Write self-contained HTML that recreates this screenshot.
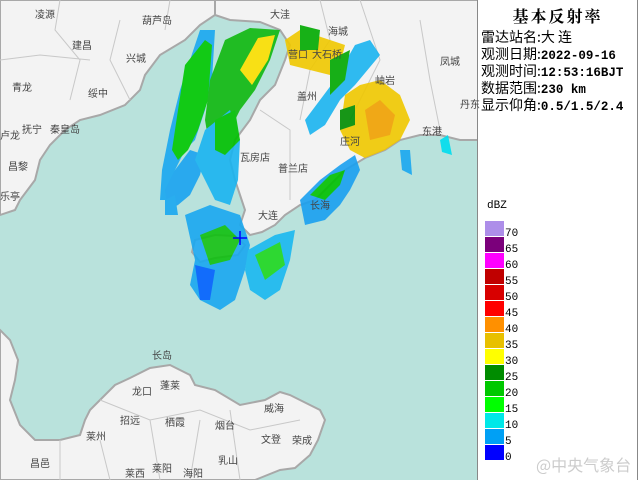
<!DOCTYPE html><html><head><meta charset="utf-8"><style>
html,body{margin:0;padding:0;width:640px;height:480px;overflow:hidden;background:#fff}
.l{position:absolute;font:10px "Liberation Sans","Noto Sans CJK SC",sans-serif;color:#444;white-space:nowrap}
.p{position:absolute;left:481px;font:14px "Noto Sans CJK SC",sans-serif;color:#000;white-space:nowrap;line-height:17px}
.p b{font:bold 12.5px "Liberation Mono",monospace}
.b{position:absolute;left:485px;width:19px;height:15px}
.n{position:absolute;left:505px;font:11px "Liberation Mono",monospace;color:#000}
</style></head><body>
<svg width="478" height="480" style="position:absolute;left:0;top:0">
<rect width="478" height="480" fill="#b9e2dc"/>
<g fill="#f3f3f3" stroke="#a8a8a8" stroke-width="2">
<polygon points="0,0 215,0 215,15 200,25 185,40 160,55 145,75 140,90 125,105 100,115 80,120 65,130 50,145 40,160 35,180 20,200 15,210 0,215"/>
<polygon points="215,0 478,0 478,140 460,140 440,135 420,135 400,140 385,150 365,158 345,170 330,185 315,200 300,205 285,215 275,225 262,232 250,235 240,225 245,210 240,195 235,180 230,160 235,140 250,120 260,100 275,85 285,60 290,45 280,30 260,22 230,20 215,15"/>
<polygon points="0,330 10,340 18,360 15,380 10,400 20,425 35,440 60,440 80,435 85,420 90,410 100,400 115,385 130,378 150,368 170,365 190,375 195,385 215,390 240,405 265,400 280,392 290,395 320,410 325,420 318,440 310,455 295,468 280,470 260,478 255,480 0,480"/>
<polygon points="195,240 215,235 235,236 245,245 238,255 215,258 200,262 192,252"/>
</g>
<g stroke="#c8c8c8" stroke-width="1" fill="none">
<path d="M60,0 L55,30 80,60 70,100 M0,60 L40,55 90,60 M120,20 L110,60 130,100 M170,0 L165,30 M320,0 L330,40 310,70 300,120 M360,0 L380,60 350,120 M420,20 L430,80 440,130 M260,110 L290,130 290,200 M100,440 L110,480 M150,420 L160,480 M200,420 L190,480 M60,440 L60,480 M230,410 L240,480 M100,400 L150,420 200,410 250,430 300,420"/>
</g>
<g opacity="0.9">
<path d="M180,90 L200,30 215,30 212,80 205,110 195,140 185,150 175,170 168,200 160,200 162,170 170,130 Z" fill="#1aa8f0"/>
<path d="M185,65 L205,40 212,45 208,100 198,130 188,150 178,160 172,150 178,110 Z" fill="#00c800"/>
<path d="M175,170 L190,150 205,155 200,175 190,195 178,205 168,210 165,190 Z" fill="#1aa3f0"/>
<path d="M210,80 L225,40 250,28 280,30 270,60 255,90 240,110 225,140 210,150 205,120 Z" fill="#10b810"/>
<path d="M240,70 L258,38 275,35 268,60 252,85 Z" fill="#ffe000"/>
<path d="M205,130 L230,110 240,140 238,180 230,205 215,200 205,180 195,160 Z" fill="#1ab4f0"/>
<path d="M215,120 L235,110 240,140 225,155 215,150 Z" fill="#00c000"/>
<path d="M285,40 L300,30 330,40 345,45 340,65 330,75 310,70 290,65 Z" fill="#f0c800"/>
<path d="M300,25 L320,30 318,50 300,50 Z" fill="#00aa00"/>
<path d="M355,45 L370,40 380,55 355,85 340,100 325,125 310,135 305,120 320,100 335,80 Z" fill="#1ab4f0"/>
<path d="M330,60 L350,50 345,80 330,95 Z" fill="#00a800"/>
<path d="M345,95 L360,85 380,80 400,95 410,120 400,140 385,150 365,158 350,150 340,130 Z" fill="#f0c800"/>
<path d="M365,110 L380,100 395,115 390,135 370,140 Z" fill="#f0a000"/>
<path d="M340,110 L355,105 355,125 340,130 Z" fill="#008c00"/>
<path d="M300,200 L320,180 340,165 355,155 360,170 350,190 340,205 325,220 305,225 Z" fill="#1aa0f0"/>
<path d="M310,195 L330,175 345,170 340,185 325,200 Z" fill="#00c000"/>
<path d="M185,215 L210,205 240,215 250,245 245,270 235,300 220,310 200,300 190,285 195,260 Z" fill="#1aa8f0"/>
<path d="M200,235 L225,225 240,240 230,260 210,265 Z" fill="#10c010"/>
<path d="M248,250 L275,235 295,230 290,260 280,290 265,300 250,290 245,270 Z" fill="#1ab8f0"/>
<path d="M255,255 L280,242 285,265 265,280 Z" fill="#20d820"/>
<path d="M195,265 L215,270 210,300 200,300 Z" fill="#0060ff"/>
<path d="M165,200 L175,195 178,215 165,215 Z" fill="#1aa8f0"/>
<path d="M440,140 L448,135 452,155 442,152 Z" fill="#00ddee"/>
<path d="M400,150 L410,150 412,175 402,170 Z" fill="#1aa8f0"/>
</g>
<path d="M233,238 h14 M240,231 v14" stroke="#0000ff" stroke-width="1.5"/>
</svg>
<div style="position:absolute;left:477px;top:0;width:1px;height:480px;background:#888"></div>
<div style="position:absolute;left:637px;top:0;width:1px;height:480px;background:#888"></div>
<div class="l" style="left:35px;top:6px">凌源</div><div class="l" style="left:142px;top:12px">葫芦岛</div>
<div class="l" style="left:72px;top:37px">建昌</div><div class="l" style="left:126px;top:50px">兴城</div>
<div class="l" style="left:12px;top:79px">青龙</div><div class="l" style="left:88px;top:85px">绥中</div>
<div class="l" style="left:22px;top:121px">抚宁</div><div class="l" style="left:50px;top:121px">秦皇岛</div>
<div class="l" style="left:0px;top:127px">卢龙</div><div class="l" style="left:8px;top:158px">昌黎</div>
<div class="l" style="left:0px;top:188px">乐亭</div><div class="l" style="left:270px;top:6px">大洼</div>
<div class="l" style="left:328px;top:23px">海城</div><div class="l" style="left:288px;top:46px">营口</div>
<div class="l" style="left:312px;top:46px">大石桥</div><div class="l" style="left:297px;top:88px">盖州</div>
<div class="l" style="left:440px;top:53px">凤城</div><div class="l" style="left:375px;top:72px">岫岩</div>
<div class="l" style="left:460px;top:96px">丹东</div><div class="l" style="left:422px;top:123px">东港</div>
<div class="l" style="left:340px;top:133px">庄河</div><div class="l" style="left:240px;top:149px">瓦房店</div>
<div class="l" style="left:278px;top:160px">普兰店</div><div class="l" style="left:310px;top:197px">长海</div>
<div class="l" style="left:258px;top:207px">大连</div><div class="l" style="left:152px;top:347px">长岛</div>
<div class="l" style="left:132px;top:383px">龙口</div><div class="l" style="left:160px;top:377px">蓬莱</div>
<div class="l" style="left:120px;top:412px">招远</div><div class="l" style="left:165px;top:414px">栖霞</div>
<div class="l" style="left:215px;top:417px">烟台</div><div class="l" style="left:264px;top:400px">威海</div>
<div class="l" style="left:261px;top:431px">文登</div><div class="l" style="left:292px;top:432px">荣成</div>
<div class="l" style="left:86px;top:428px">莱州</div><div class="l" style="left:30px;top:455px">昌邑</div>
<div class="l" style="left:218px;top:452px">乳山</div><div class="l" style="left:125px;top:465px">莱西</div>
<div class="l" style="left:152px;top:460px">莱阳</div><div class="l" style="left:183px;top:465px">海阳</div>
<div style="position:absolute;left:478px;top:4px;width:159px;text-align:center;font:bold 16px 'Noto Serif CJK SC',serif;letter-spacing:2px">基本反射率</div>
<div class="p" style="top:29px">雷达站名:大 连</div>
<div class="p" style="top:46px">观测日期:<b>2022-09-16</b></div>
<div class="p" style="top:63px">观测时间:<b>12:53:16BJT</b></div>
<div class="p" style="top:80px">数据范围:<b>230 km</b></div>
<div class="p" style="top:97px">显示仰角:<b>0.5/1.5/2.4</b></div>
<div class="n" style="left:487px;top:200px">dBZ</div>
<div class="b" style="top:221px;background:#ad8ee9"></div><div class="n" style="top:228px">70</div>
<div class="b" style="top:237px;background:#7b007b"></div><div class="n" style="top:244px">65</div>
<div class="b" style="top:253px;background:#ff00ff"></div><div class="n" style="top:260px">60</div>
<div class="b" style="top:269px;background:#c00000"></div><div class="n" style="top:276px">55</div>
<div class="b" style="top:285px;background:#d80000"></div><div class="n" style="top:292px">50</div>
<div class="b" style="top:301px;background:#ff0000"></div><div class="n" style="top:308px">45</div>
<div class="b" style="top:317px;background:#ff9000"></div><div class="n" style="top:324px">40</div>
<div class="b" style="top:333px;background:#e8c000"></div><div class="n" style="top:340px">35</div>
<div class="b" style="top:349px;background:#ffff00"></div><div class="n" style="top:356px">30</div>
<div class="b" style="top:365px;background:#008c00"></div><div class="n" style="top:372px">25</div>
<div class="b" style="top:381px;background:#00c800"></div><div class="n" style="top:388px">20</div>
<div class="b" style="top:397px;background:#00ff00"></div><div class="n" style="top:404px">15</div>
<div class="b" style="top:413px;background:#00e8e8"></div><div class="n" style="top:420px">10</div>
<div class="b" style="top:429px;background:#00a0f5"></div><div class="n" style="top:436px">5</div>
<div class="b" style="top:445px;background:#0000ff"></div><div class="n" style="top:452px">0</div>
<div style="position:absolute;left:536px;top:452px;font:16px 'Noto Sans CJK SC',sans-serif;color:#ccc">@中央气象台</div>
</body></html>
